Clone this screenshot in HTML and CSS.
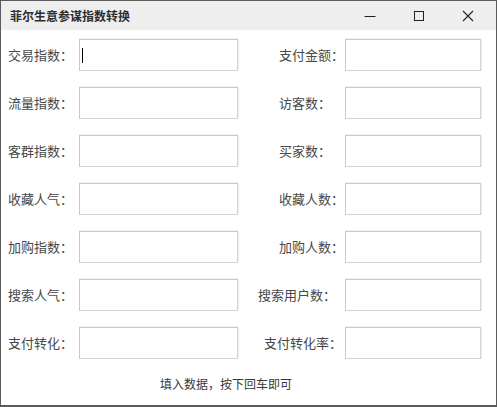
FILE: index.html
```html
<!DOCTYPE html>
<html lang="zh">
<head>
<meta charset="utf-8">
<title>菲尔生意参谋指数转换</title>
<link rel="stylesheet" href="styles.css">
</head>
<body>
<div class="window">
  <div class="titlebar">
    <span class="title">菲尔生意参谋指数转换</span>
    <div class="controls">
      <span class="ctl">
        <svg width="12" height="12" viewBox="0 0 12 12"><line x1="0.5" y1="6.5" x2="11.5" y2="6.5" stroke="#222" stroke-width="1"/></svg>
      </span>
      <span class="ctl">
        <svg width="12" height="12" viewBox="0 0 12 12"><rect x="1.5" y="1.5" width="9" height="9" fill="none" stroke="#222" stroke-width="1"/></svg>
      </span>
      <span class="ctl">
        <svg width="12" height="12" viewBox="0 0 12 12"><path d="M1 1 L11 11 M11 1 L1 11" stroke="#222" stroke-width="1.1"/></svg>
      </span>
    </div>
  </div>
  <div class="form">
    <label class="lbl">交易指数：</label>
    <div class="field in-left focus"><span class="caret"></span></div>
    <label class="lbl rl">支付金额：</label>
    <div class="field in-right"></div>

    <label class="lbl">流量指数：</label>
    <div class="field in-left"></div>
    <label class="lbl rl">访客数：</label>
    <div class="field in-right"></div>

    <label class="lbl">客群指数：</label>
    <div class="field in-left"></div>
    <label class="lbl rl">买家数：</label>
    <div class="field in-right"></div>

    <label class="lbl">收藏人气：</label>
    <div class="field in-left"></div>
    <label class="lbl rl">收藏人数：</label>
    <div class="field in-right"></div>

    <label class="lbl">加购指数：</label>
    <div class="field in-left"></div>
    <label class="lbl rl">加购人数：</label>
    <div class="field in-right"></div>

    <label class="lbl">搜索人气：</label>
    <div class="field in-left"></div>
    <label class="lbl rl wide">搜索用户数：</label>
    <div class="field in-right"></div>

    <label class="lbl">支付转化：</label>
    <div class="field in-left"></div>
    <label class="lbl rl mid">支付转化率：</label>
    <div class="field in-right"></div>
  </div>
  <div class="note">填入数据，按下回车即可</div>
</div>
</body>
</html>
```
FILE: styles.css
```css
html, body {
  margin: 0;
  padding: 0;
  background: #ffffff;
}
body {
  font-family: "Noto Sans CJK SC", "Noto Sans", sans-serif;
}
.window {
  box-sizing: border-box;
  width: 497px;
  height: 407px;
  border: 1px solid #5c5c5c;
  border-bottom-width: 2px;
  background: #ffffff;
  display: flex;
  flex-direction: column;
}
.titlebar {
  height: 29px;
  background: #eeeeee;
  display: flex;
  align-items: center;
  justify-content: space-between;
  padding-left: 9px;
}
.title {
  font-size: 12px;
  color: #2e2e2e;
  font-weight: 700;
  line-height: 14px;
}
.controls {
  display: flex;
  height: 100%;
  padding-right: 4px;
}
.ctl {
  width: 49px;
  height: 100%;
  display: flex;
  align-items: center;
  justify-content: center;
}
.form {
  display: grid;
  grid-template-columns: 71px 159px 107px 136px;
  grid-auto-rows: 32px;
  row-gap: 16px;
  padding-left: 7px;
  margin-top: 9px;
}
.lbl {
  display: flex;
  align-items: center;
  font-size: 13px;
  color: #484848;
  white-space: nowrap;
  padding-bottom: 2px;
}
.rl {
  padding-left: 41px;
}
.rl.wide {
  padding-left: 20px;
}
.rl.mid {
  padding-left: 26px;
}
.field {
  box-sizing: border-box;
  border: 1px solid #c9c9c9;
  border-right-color: #d6d6d6;
  border-bottom-color: #d2d2d2;
  background: #ffffff;
  box-shadow: 1px 0 0 #ececec, 0 -1px 0 #f3f3f3;
  display: flex;
  align-items: center;
}
.caret {
  display: block;
  width: 1px;
  height: 15px;
  margin-left: 2px;
  background: #000000;
}
.note {
  margin-top: 17px;
  padding-left: 159px;
  font-size: 12px;
  color: #3a3a3a;
  line-height: 16px;
}
```
